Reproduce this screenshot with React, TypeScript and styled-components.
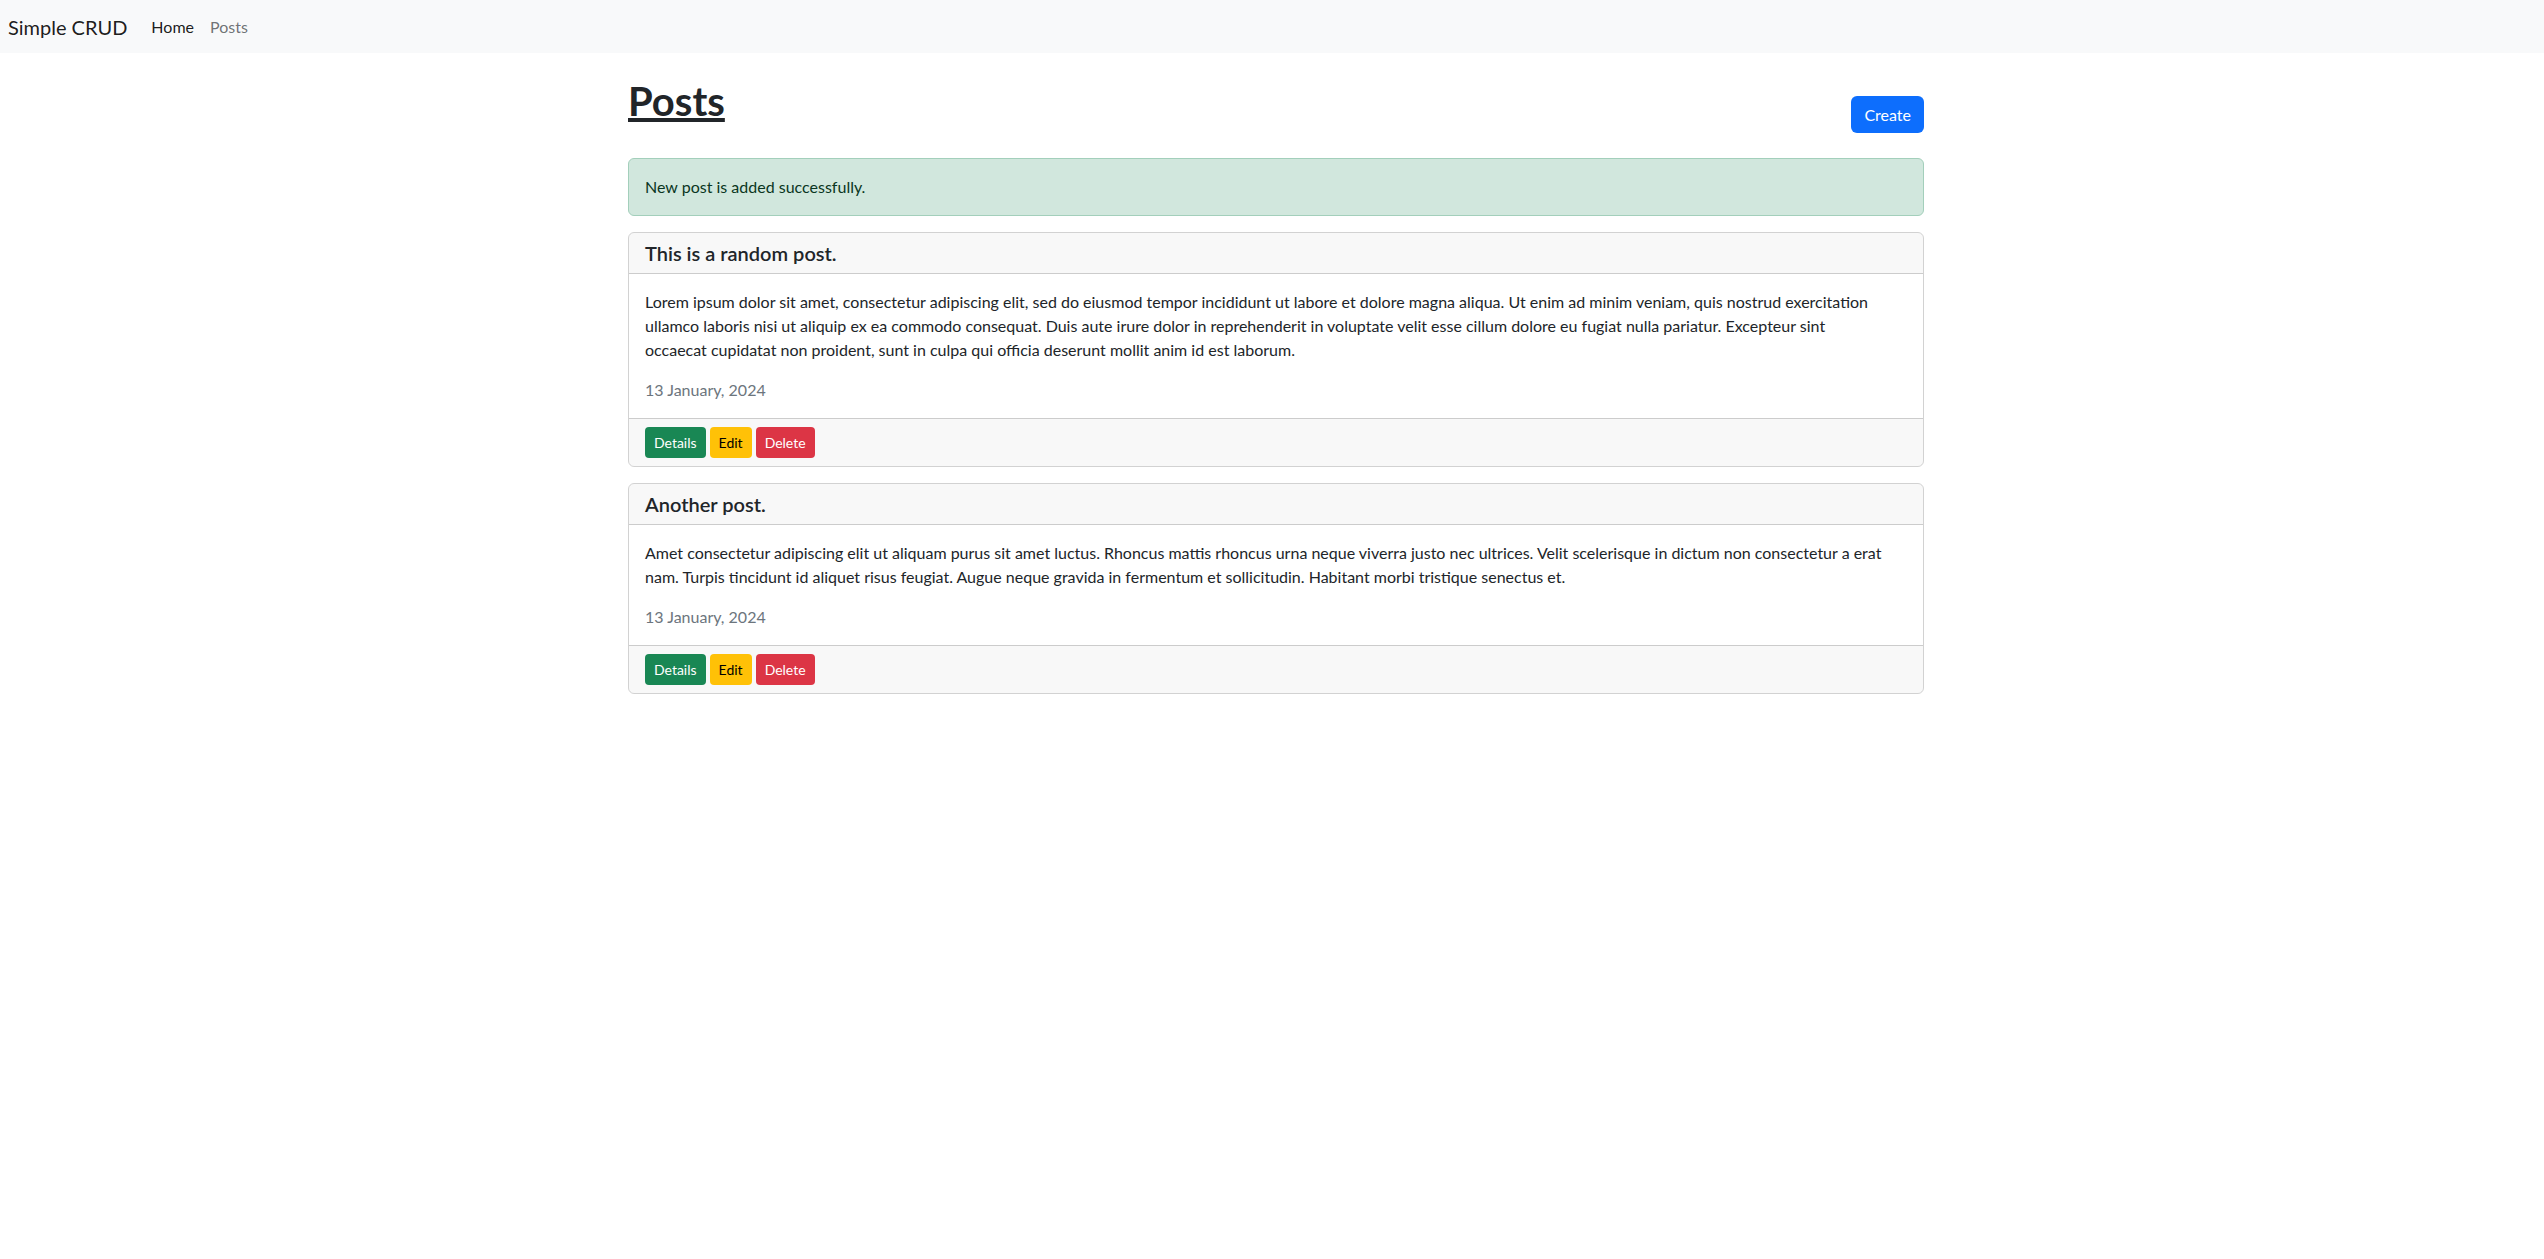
import React from 'react';
import styled, { createGlobalStyle } from 'styled-components';

type Post = {
    id: number,
    title: string,
    body: string,
    date: string,
}

// Lato wraps a little differently from Segoe UI, so the first post keeps its break after "sint"
const posts: Post[] = [
    {
        id: 1,
        title: 'This is a random post.',
        body: 'Lorem ipsum dolor sit amet, consectetur adipiscing elit, sed do eiusmod tempor incididunt ut labore et dolore magna aliqua. Ut enim ad minim veniam, quis nostrud exercitation ullamco laboris nisi ut aliquip ex ea commodo consequat. Duis aute irure dolor in reprehenderit in voluptate velit esse cillum dolore eu fugiat nulla pariatur. Excepteur sint\noccaecat cupidatat non proident, sunt in culpa qui officia deserunt mollit anim id est laborum.',
        date: '13 January, 2024',
    },
    {
        id: 2,
        title: 'Another post.',
        body: 'Amet consectetur adipiscing elit ut aliquam purus sit amet luctus. Rhoncus mattis rhoncus urna neque viverra justo nec ultrices. Velit scelerisque in dictum non consectetur a erat nam. Turpis tincidunt id aliquet risus feugiat. Augue neque gravida in fermentum et sollicitudin. Habitant morbi tristique senectus et.',
        date: '13 January, 2024',
    },
];

const GlobalStyle = createGlobalStyle`
  * {
    box-sizing: border-box;
  }
  body {
    margin: 0;
    font-family: "Segoe UI", Lato, "Liberation Sans", sans-serif;
    font-size: 16px;
    line-height: 1.5;
    color: #212529;
    background: #fff;
  }
`

const Navbar = styled.nav`
  height: 53px;
  padding: 0 8px;
  display: flex;
  align-items: center;
  background-color: #f8f9fa;
`

const Brand = styled.a`
  font-size: 20px;
  line-height: 30px;
  padding: 5px 0;
  margin-right: 16px;
  color: rgba(0, 0, 0, 0.9);
  text-decoration: none;
`

const NavLink = styled.a<{ $active?: boolean }>`
  padding: 8px;
  color: ${props => props.$active ? 'rgba(0, 0, 0, 0.9)' : 'rgba(33, 37, 41, 0.65)'};
  text-decoration: none;
`

const Container = styled.main`
  width: 1296px;
  margin: 24px 0 0 calc(50% - 644px);
`

const TitleRow = styled.div`
  display: flex;
  justify-content: space-between;
  align-items: flex-end;
  margin-bottom: 25px;
`

const PageTitle = styled.h1`
  margin: 0 0 8px;
  font-size: 40px;
  line-height: 48px;
  font-weight: 700;
  text-decoration: underline;
`

const Button = styled.button<{ $variant: 'primary' | 'success' | 'warning' | 'danger', $small?: boolean }>`
  display: inline-block;
  font-family: inherit;
  font-size: ${props => props.$small ? '14px' : '16px'};
  line-height: ${props => props.$small ? '21px' : '23px'};
  padding: ${props => props.$small ? '4px 8px' : '6px 12px'};
  border-radius: ${props => props.$small ? '4px' : '6px'};
  border: 1px solid transparent;
  cursor: pointer;
  color: ${props => props.$variant === 'warning' ? '#000' : '#fff'};
  background-color: ${props => ({
        primary: '#0d6efd',
        success: '#198754',
        warning: '#ffc107',
        danger: '#dc3545',
    })[props.$variant]};
`

const Alert = styled.div`
  padding: 16px;
  margin-bottom: 16px;
  border: 1px solid #a3cfbb;
  border-radius: 6px;
  background-color: #d1e7dd;
  color: #0a3622;
`

const Card = styled.article`
  margin-bottom: 16px;
  border: 1px solid rgba(0, 0, 0, 0.175);
  border-radius: 6px;
  overflow: hidden;
`

const CardHeader = styled.div`
  padding: 8px 16px;
  background-color: rgba(33, 37, 41, 0.03);
  border-bottom: 1px solid rgba(0, 0, 0, 0.175);
`

const CardTitle = styled.h5`
  margin: 0;
  font-size: 20px;
  line-height: 24px;
  font-weight: 600;
`

const CardBody = styled.div`
  padding: 16px;
`

const BodyText = styled.p`
  margin: 0 0 16px;
  white-space: pre-line;
`

const DateText = styled.p`
  margin: 0;
  color: #6c757d;
`

const CardFooter = styled.div`
  display: flex;
  gap: 4px;
  padding: 8px 16px;
  background-color: rgba(33, 37, 41, 0.03);
  border-top: 1px solid rgba(0, 0, 0, 0.175);
`

const PostCard: React.FC<{ post: Post }> = ({ post }) => {
    return (
        <Card>
            <CardHeader>
                <CardTitle>{post.title}</CardTitle>
            </CardHeader>
            <CardBody>
                <BodyText>{post.body}</BodyText>
                <DateText>{post.date}</DateText>
            </CardBody>
            <CardFooter>
                <Button $variant="success" $small>Details</Button>
                <Button $variant="warning" $small>Edit</Button>
                <Button $variant="danger" $small>Delete</Button>
            </CardFooter>
        </Card>
    )
}

const App: React.FC = () => {
    return (
        <>
            <GlobalStyle />
            <Navbar>
                <Brand href="#">Simple CRUD</Brand>
                <NavLink href="#" $active>Home</NavLink>
                <NavLink href="#">Posts</NavLink>
            </Navbar>
            <Container>
                <TitleRow>
                    <PageTitle>Posts</PageTitle>
                    <Button $variant="primary">Create</Button>
                </TitleRow>
                <Alert>New post is added successfully.</Alert>
                {posts.map(post => <PostCard key={post.id} post={post} />)}
            </Container>
        </>
    )
}

export default App;
